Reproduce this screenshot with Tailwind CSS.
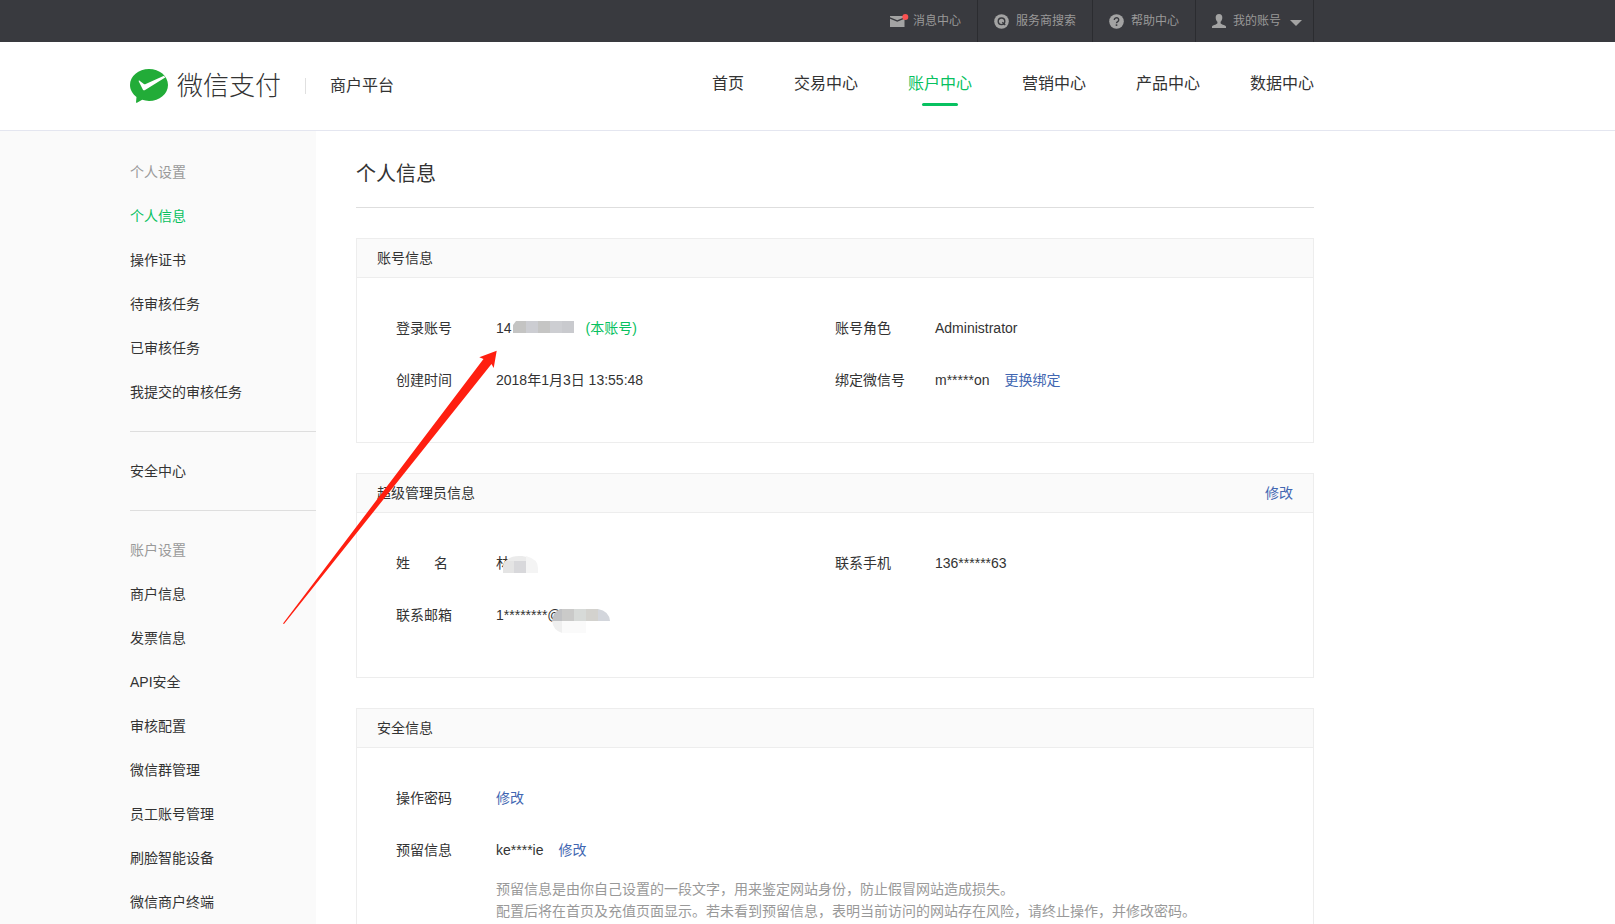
<!DOCTYPE html>
<html lang="zh-CN">
<head>
<meta charset="utf-8">
<meta name="viewport" content="width=device-width, initial-scale=1">
<title>微信支付 商户平台 - 个人信息</title>
<script src="https://cdn.jsdelivr.net/npm/@tailwindcss/browser@4"></script>
</head>
<body class="relative min-h-screen overflow-x-hidden bg-white font-['Liberation_Sans','Noto_Sans_CJK_SC',sans-serif] text-sm leading-[22px] text-[#333]">

<!-- Top utility bar -->
<div class="bg-[#393a3f] pl-[130px]">
  <div class="flex h-[42px] max-w-[1184px] justify-end text-xs text-[#999]">
    <a href="#" class="flex items-center border-r border-[#2b2c30] px-4">
      <svg class="mr-1 h-[14px] w-[19px]" viewBox="0 0 19 14" aria-hidden="true">
        <path d="M0 2h14.500v1.200L7.250 6.200 0 3.200zM0 4.700l7.250 3L14.500 4.700v8.300H0z" fill="#a3a3a3"/>
        <circle cx="15.300" cy="3" r="3" fill="#fa5151"/>
      </svg>
      <span>消息中心</span>
    </a>
    <a href="#" class="flex items-center border-r border-[#2b2c30] px-4">
      <svg class="mr-[7px] size-[15px]" viewBox="0 0 15 15" aria-hidden="true">
        <circle cx="7.500" cy="7.500" r="7.300" fill="#a3a3a3"/>
        <circle cx="7.500" cy="7.300" r="3.300" fill="none" stroke="#393a3f" stroke-width="1.400"/>
        <path d="M8.300 8.300l2.900 2.800" stroke="#393a3f" stroke-width="1.400"/>
      </svg>
      <span>服务商搜索</span>
    </a>
    <a href="#" class="flex items-center border-r border-[#2b2c30] px-4">
      <svg class="mr-[7px] size-[15px]" viewBox="0 0 15 15" aria-hidden="true">
        <circle cx="7.500" cy="7.500" r="7.300" fill="#a3a3a3"/>
        <path d="M5.300 5.900a2.200 2.100 0 1 1 3.400 1.700c-.8.500-1.200.8-1.200 1.700" fill="none" stroke="#393a3f" stroke-width="1.400"/>
        <path d="M6.700 10.300h1.600v1.600H6.700z" fill="#393a3f"/>
      </svg>
      <span>帮助中心</span>
    </a>
    <button type="button" class="flex items-center border-r border-[#2b2c30] pr-[11px] pl-4">
      <svg class="mr-[7px] size-[14px]" viewBox="0 0 14 14" aria-hidden="true">
        <path d="M7 0c2.200 0 3.500 1.500 3.300 3.900-.1 1.700-.9 3-1.700 3.900v1.300c0 .7.600 1 1.600 1.300 2.300.6 3.800 1.100 3.800 2.400V14H0v-1.200c0-1.300 1.500-1.800 3.800-2.400 1-.3 1.600-.6 1.600-1.300V7.800C4.600 6.900 3.800 5.600 3.700 3.900 3.500 1.500 4.800 0 7 0z" fill="#a3a3a3"/>
      </svg>
      <span>我的账号</span>
      <svg class="mt-1 ml-[9px] h-[6px] w-[12px]" viewBox="0 0 12 6" aria-hidden="true"><path d="M0 0h12L6 6z" fill="#a3a3a3"/></svg>
    </button>
  </div>
</div>

<!-- Brand and main navigation -->
<header class="border-b border-[#e4e6f0] pl-[130px]">
  <div class="flex h-[88px] max-w-[1184px] items-center justify-between text-base">
    <div class="flex items-center">
      <a href="#" class="flex items-center">
        <svg class="h-[34px] w-[38px]" viewBox="0 0 38 34" aria-hidden="true">
          <path d="M19 0C8.500 0 0 7.100 0 16c0 4.700 2.500 8.900 6.500 11.900L6 33.200c0 .6.500.8 1 .5l5.200-2.900c2.100.7 4.400 1.100 6.800 1.100 10.500 0 19-7.100 19-16S29.500 0 19 0z" fill="#22ac38"/>
          <path d="M8.800 12.600c-.4-1 .3-1.300 1.100-.7l4 3c.6.400 1.100.4 1.800.1L34 6.800l1.200 1.600L15.500 20.800c-1.200.8-2.200.7-2.700-.4z" fill="#fff"/>
        </svg>
        <span class="ml-[9px] text-[26px] font-light text-[#333]">微信支付</span>
      </a>
      <span class="mx-6 h-4 w-px bg-[#e0e0e0]"></span>
      <span>商户平台</span>
    </div>
    <nav class="flex gap-[50px] pb-[5px]">
      <a href="#">首页</a>
      <a href="#">交易中心</a>
      <a href="#" class="relative text-[#07c160]">账户中心<span class="absolute top-[31px] left-[14px] h-[3px] w-9 rounded-full bg-[#07c160]"></span></a>
      <a href="#">营销中心</a>
      <a href="#">产品中心</a>
      <a href="#">数据中心</a>
    </nav>
  </div>
</header>

<div class="flex">
  <aside class="w-[316px] shrink-0 bg-[#fafafa] pt-[19px] pl-[130px] leading-[44px]">
    <h2 class="text-[#999]">个人设置</h2>
    <ul>
      <li><a href="#" class="text-[#07c160]">个人信息</a></li>
      <li><a href="#">操作证书</a></li>
      <li><a href="#">待审核任务</a></li>
      <li><a href="#">已审核任务</a></li>
      <li><a href="#">我提交的审核任务</a></li>
    </ul>
    <hr class="my-[17px] border-[#dedede]">
    <a href="#" class="block">安全中心</a>
    <hr class="my-[17px] border-[#dedede]">
    <h2 class="text-[#999]">账户设置</h2>
    <ul>
      <li><a href="#">商户信息</a></li>
      <li><a href="#">发票信息</a></li>
      <li><a href="#">API安全</a></li>
      <li><a href="#">审核配置</a></li>
      <li><a href="#">微信群管理</a></li>
      <li><a href="#">员工账号管理</a></li>
      <li><a href="#">刷脸智能设备</a></li>
      <li><a href="#">微信商户终端</a></li>
    </ul>
  </aside>

  <main class="ml-10 max-w-[958px] flex-1">
    <h1 class="border-b border-[#dedede] pt-7 pb-[18px] text-xl leading-[30px]">个人信息</h1>

    <section class="mt-[30px] border border-[#ededed]">
      <h2 class="border-b border-[#ededed] bg-[#fafafa] px-5 leading-[38px]">账号信息</h2>
      <dl class="grid grid-cols-2 gap-y-[30px] px-[39px] pt-[39px] pb-[51px]">
        <div class="flex">
          <dt class="w-[100px]">登录账号</dt>
          <dd class="flex items-center">14
            <svg class="mr-3 mb-[2px] ml-px h-3 w-[61px]" viewBox="0 0 61 12" aria-hidden="true">
              <path d="M3 0h10v12H0V4z" fill="#c4c4c3"/><path d="M13 0h12v12H13z" fill="#cccdd2"/><path d="M25 0h12v12H25z" fill="#c5c5c4"/><path d="M37 0h12v12H37z" fill="#cdced2"/><path d="M49 0h12v12H49z" fill="#c9cace"/>
            </svg>
            <span class="text-[#07c160]">(本账号)</span>
          </dd>
        </div>
        <div class="flex">
          <dt class="w-[100px]">账号角色</dt>
          <dd>Administrator</dd>
        </div>
        <div class="flex">
          <dt class="w-[100px]">创建时间</dt>
          <dd>2018年1月3日 13:55:48</dd>
        </div>
        <div class="flex">
          <dt class="w-[100px]">绑定微信号</dt>
          <dd>m*****on<a href="#" class="ml-[15px] text-[#4267b2]">更换绑定</a></dd>
        </div>
      </dl>
    </section>

    <section class="mt-[30px] border border-[#ededed]">
      <div class="flex justify-between border-b border-[#ededed] bg-[#fafafa] px-5 leading-[38px]">
        <h2>超级管理员信息</h2>
        <a href="#" class="text-[#4267b2]">修改</a>
      </div>
      <dl class="grid grid-cols-2 gap-y-[30px] px-[39px] pt-[39px] pb-[51px]">
        <div class="flex">
          <dt class="w-[100px]">姓<span class="ml-6">名</span></dt>
          <dd class="relative">林
            <svg class="absolute top-1 left-[7px] h-[17px] w-[35px]" viewBox="0 0 35 17" aria-hidden="true">
              <path d="M0 17V12Q0 6 5 3Q9 0 16 0H19Q35 2 35 17z" fill="#ebebeb"/>
              <path d="M0 17v-5q0-4 2-7h9v12z" fill="#e4e4e4"/><path d="M11 5h12v12H11z" fill="#d8d8db"/><path d="M23 0q12 3 12 12v5H23z" fill="#f4f4f4"/>
            </svg>
          </dd>
        </div>
        <div class="flex">
          <dt class="w-[100px]">联系手机</dt>
          <dd>136******63</dd>
        </div>
        <div class="flex">
          <dt class="w-[100px]">联系邮箱</dt>
          <dd class="relative">1********@
            <svg class="absolute top-[5px] left-14 h-6 w-[58px]" viewBox="0 0 58 24" aria-hidden="true">
              <path d="M0 12Q1 3 8 0h2v12z" fill="#c0c1c4"/><path d="M10 0h12v12H10z" fill="#cacac9"/><path d="M22 0h12v12H22z" fill="#d7dad8"/><path d="M34 0h12v12H34z" fill="#d3d2ce"/><path d="M46 0q11 2 12 12H46z" fill="#d3d6dc"/>
              <path d="M0 12h10v12Q1 21 0 12z" fill="#efefef"/><path d="M10 12h24v12H10z" fill="#fafafa"/>
            </svg>
          </dd>
        </div>
      </dl>
    </section>

    <section class="mt-[30px] border border-[#ededed]">
      <h2 class="border-b border-[#ededed] bg-[#fafafa] px-5 leading-[38px]">安全信息</h2>
      <dl class="grid gap-y-[30px] px-[39px] pt-[39px] pb-[51px]">
        <div class="flex">
          <dt class="w-[100px]">操作密码</dt>
          <dd><a href="#" class="text-[#4267b2]">修改</a></dd>
        </div>
        <div class="flex">
          <dt class="w-[100px]">预留信息</dt>
          <dd>
            ke****ie<a href="#" class="ml-[15px] text-[#4267b2]">修改</a>
            <p class="mt-[17px] text-[#999]">预留信息是由你自己设置的一段文字，用来鉴定网站身份，防止假冒网站造成损失。<br>配置后将在首页及充值页面显示。若未看到预留信息，表明当前访问的网站存在风险，请终止操作，并修改密码。</p>
          </dd>
        </div>
      </dl>
    </section>
  </main>
</div>

<!-- Arrow annotation pointing at the login account -->
<svg class="pointer-events-none absolute top-[350px] left-[282px] h-[276px] w-[216px]" viewBox="282 350 216 276" aria-hidden="true">
  <path d="M283 623.500L483.500 359l-4.200-1.700L496.700 350.700 493.700 368l-2.200-4L284 624z" fill="#ff1f10"/>
</svg>
</body>
</html>
